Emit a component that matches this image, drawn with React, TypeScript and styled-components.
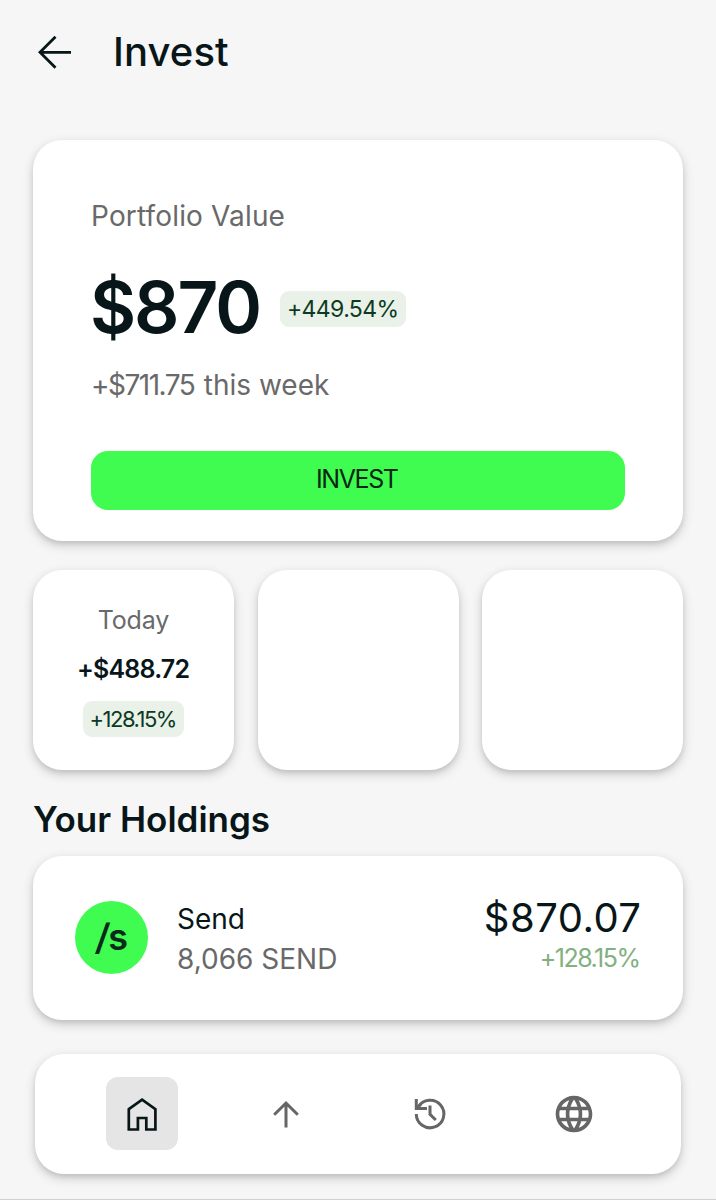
import React from "react";
import styled, { createGlobalStyle } from "styled-components";
import { MdLanguage } from "react-icons/md";

const GlobalStyle = createGlobalStyle`
  * { box-sizing: border-box; }
  body { margin: 0; background: #f6f6f6; font-family: Inter, "Liberation Sans", sans-serif; }
`;

const ink = "#081619";
const grey = "#696969";
const lime = "#40fb50";
const elevation = "0 4px 11px rgba(0, 0, 0, 0.19), 0 3px 4px rgba(0, 0, 0, 0.07)";

const Screen = styled.main`
  display: flex;
  flex-direction: column;
  width: 716px;
  height: 1200px;
  padding: 0 33px;
  background: #f6f6f6;
  border-bottom: 1px solid #d0d0d0;
  overflow: hidden;
`;

const Text = styled.span<{ $size: number; $line: number; $weight?: number; $track?: number; $color?: string }>`
  display: block;
  margin: 0 ${(p) => -(p.$track ?? 0)}px 0 0;
  font-size: ${(p) => p.$size}px;
  line-height: ${(p) => p.$line}px;
  font-weight: ${(p) => p.$weight ?? 400};
  letter-spacing: ${(p) => p.$track ?? 0}px;
  color: ${(p) => p.$color ?? ink};
  white-space: nowrap;
`;

const Tight = styled.span`
  letter-spacing: -1.5px;
  margin-right: 1.5px;
`;

const Header = styled.header`
  display: flex;
  align-items: center;
  gap: 40px;
  height: 103px;
  padding-left: 4px;
  margin-bottom: 36.5px;
`;

const Card = styled.section`
  flex: none;
  background: #fff;
  border-radius: 29px;
  box-shadow: ${elevation};
`;

const Portfolio = styled(Card)`
  display: flex;
  flex-direction: column;
  height: 401px;
  padding: 61.5px 58px 31px;
`;

const ValueRow = styled.div`
  display: flex;
  align-items: center;
  justify-content: space-between;
  width: 315px;
  height: 80px;
  margin: 36px 0 23px;
`;

const Value = styled(Text)`
  margin-left: -1px;
`;

const Badge = styled.div<{ $width: number; $drop?: number }>`
  display: flex;
  justify-content: center;
  align-items: center;
  width: ${(p) => p.$width}px;
  height: 36px;
  margin-top: ${(p) => p.$drop ?? 0}px;
  border-radius: 9px;
  background: #e9f1e9;
`;

const InvestButton = styled.button`
  display: flex;
  justify-content: center;
  align-items: center;
  width: 100%;
  height: 58.5px;
  margin-top: auto;
  padding: 0 1px 2px 0;
  border: 0;
  border-radius: 17px;
  background: ${lime};
  font-family: inherit;
`;

const Stats = styled.div`
  display: grid;
  grid-template-columns: repeat(3, 201px);
  justify-content: space-between;
  margin: 29.5px 0 34px;
`;

const Stat = styled(Card)`
  display: flex;
  flex-direction: column;
  align-items: center;
  height: 200px;
  padding-top: 34.5px;
`;

const Holding = styled(Card)`
  display: flex;
  align-items: center;
  height: 164px;
  margin-top: 20.5px;
  padding: 0 42px 1px;
`;

const Logo = styled.div`
  display: flex;
  align-items: center;
  justify-content: center;
  width: 73px;
  height: 73px;
  padding-left: 1px;
  border-radius: 50%;
  background: ${lime};
`;

const Slash = styled.span`
  display: inline-block;
  transform: skewX(-5deg);
`;

const Lines = styled.div<{ $end?: boolean }>`
  display: flex;
  flex-direction: column;
  align-items: ${(p) => (p.$end ? "flex-end" : "flex-start")};
  margin-left: ${(p) => (p.$end ? "auto" : "29px")};
  padding-top: ${(p) => (p.$end ? 0 : 3)}px;
`;

const Nav = styled.nav`
  flex: none;
  display: flex;
  align-items: center;
  gap: 72px;
  height: 120.5px;
  margin: 34px 2px 0;
  padding-left: 71px;
  border-radius: 29px;
  background: #fff;
  box-shadow: ${elevation};
`;

const NavItem = styled.a<{ $active?: boolean }>`
  display: grid;
  place-items: center;
  width: 72px;
  height: 73px;
  border-radius: 12px;
  color: ${(p) => (p.$active ? ink : "#666666")};
  background: ${(p) => (p.$active ? "#e5e5e5" : "transparent")};
`;

const BackIcon = () => (
  <svg width="36" height="36" viewBox="0 0 36 36" fill="none" stroke={ink} strokeWidth="2.8">
    <path d="M34 18.3H3.5M18.5 2.8L3 18.3L18.5 33.8" />
  </svg>
);

const HomeIcon = () => (
  <svg width="36" height="36" viewBox="0 0 36 36" fill="none" stroke="currentColor" strokeWidth="2.7">
    <path d="M4.8 13.2L18.1 3.6L31.4 13.2V33.5H22.3V22H13.9V33.5H4.8Z" />
  </svg>
);

const SendIcon = () => (
  <svg width="36" height="36" viewBox="0 0 36 36" fill="none" stroke="currentColor" strokeWidth="3">
    <path d="M18 31.5V7M6.2 18.8L18 7L29.8 18.8" />
  </svg>
);

const HistoryIcon = () => (
  <svg width="36" height="36" viewBox="0 0 36 36" fill="none" stroke="currentColor" strokeWidth="3">
    <path d="M4.3 18A13.8 13.8 0 1 0 6.2 11" />
    <path d="M4.3 3V12.5H15M18 9.5V18.3L23.8 24M5 12L9 8" />
  </svg>
);

export default function App() {
  return (
    <>
      <GlobalStyle />
      <Screen>
        <Header>
          <BackIcon />
          <Text as="h1" $size={40} $line={45} $weight={500} $track={0.1}>Invest</Text>
        </Header>

        <Portfolio>
          <Text $size={28} $line={30} $track={0.15} $color={grey}>Portfolio Value</Text>
          <ValueRow>
            <Value $size={71} $line={80} $weight={600} $track={-2.1}>$870</Value>
            <Badge $width={126} $drop={3}>
              <Text $size={23} $line={30} $track={-0.6} $color="#0c3b22">+449.54%</Text>
            </Badge>
          </ValueRow>
          <Text $size={28} $line={30} $color={grey}><Tight>+$711.75</Tight> this week</Text>
          <InvestButton>
            <Text $size={25} $line={30} $track={-1.4} $color="#0a2712">INVEST</Text>
          </InvestButton>
        </Portfolio>

        <Stats>
          <Stat>
            <Text $size={25} $line={30} $track={-0.2} $color={grey}>Today</Text>
            <Text $size={25} $line={68} $weight={600} $track={-0.8}>+$488.72</Text>
            <Badge $width={101} $drop={-1.5}>
              <Text $size={22} $line={30} $track={-1.5} $color="#0c3b22">+128.15%</Text>
            </Badge>
          </Stat>
          <Stat />
          <Stat />
        </Stats>

        <Text $size={35} $line={31} $weight={600}>Your Holdings</Text>
        <Holding>
          <Logo>
            <Text $size={36} $line={36} $weight={600} $track={-1.5} $color="#0a2a1a"><Slash>/</Slash>s</Text>
          </Logo>
          <Lines>
            <Text $size={28} $line={40}>Send</Text>
            <Text $size={28} $line={40} $color={grey}>8,066 SEND</Text>
          </Lines>
          <Lines $end>
            <Text $size={40} $line={41} $track={0.5}>$870.07</Text>
            <Text $size={25} $line={40} $track={-1.5} $color="#82b07f">+128.15%</Text>
          </Lines>
        </Holding>

        <Nav>
          <NavItem $active><HomeIcon /></NavItem>
          <NavItem><SendIcon /></NavItem>
          <NavItem><HistoryIcon /></NavItem>
          <NavItem><MdLanguage size={44} /></NavItem>
        </Nav>
      </Screen>
    </>
  );
}
